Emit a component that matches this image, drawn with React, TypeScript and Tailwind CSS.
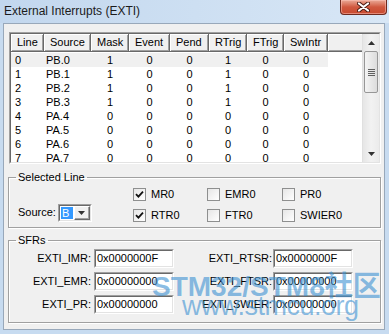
import React from 'react';

const headers = [
  { label: 'Line', w: 'w-[33px]' },
  { label: 'Source', w: 'w-[47px]' },
  { label: 'Mask', w: 'w-[38px]' },
  { label: 'Event', w: 'w-[41px]' },
  { label: 'Pend', w: 'w-[39px]' },
  { label: 'RTrig', w: 'w-[38px]' },
  { label: 'FTrig', w: 'w-[37px]' },
  { label: 'SwIntr', w: 'w-[44px]' },
];

const cellClass = [
  'w-[33px] pl-[4px]',
  'w-[47px] pl-[2px]',
  'w-[38px] text-center',
  'w-[41px] text-center',
  'w-[39px] text-center',
  'w-[38px] text-center',
  'w-[37px] text-center',
  'w-[44px] text-center',
];

const rows = [
  ['0', 'PB.0', '1', '0', '0', '1', '0', '0'],
  ['1', 'PB.1', '1', '0', '0', '1', '0', '0'],
  ['2', 'PB.2', '1', '0', '0', '1', '0', '0'],
  ['3', 'PB.3', '1', '0', '0', '1', '0', '0'],
  ['4', 'PA.4', '0', '0', '0', '0', '0', '0'],
  ['5', 'PA.5', '0', '0', '0', '0', '0', '0'],
  ['6', 'PA.6', '0', '0', '0', '0', '0', '0'],
  ['7', 'PA.7', '0', '0', '0', '0', '0', '0'],
];

const sunken =
  'border border-t-[#a0a0a0] border-l-[#a0a0a0] border-r-white border-b-white';
const sunkenInner =
  'border border-t-[#696969] border-l-[#696969] border-r-[#e3e3e3] border-b-[#e3e3e3]';

function Check({ checked, label }: { checked?: boolean; label: string }) {
  return (
    <div className="h-[19px] flex items-center gap-[5px]">
      <span className="w-[13px] h-[13px] border border-[#8e8f8f] bg-gradient-to-br from-[#e6e6e6] to-white flex items-center justify-center">
        {checked && (
          <svg width="9" height="9" viewBox="0 0 9 9">
            <path d="M1 4.2 L3.4 6.6 L8 1.6" stroke="#111" strokeWidth="1.8" fill="none" />
          </svg>
        )}
      </span>
      <span>{label}</span>
    </div>
  );
}

function Field({ value }: { value: string }) {
  return (
    <div className={`w-[80px] h-[19px] bg-white ${sunken}`}>
      <div className={`h-full flex items-center pl-[1px] ${sunkenInner}`}>{value}</div>
    </div>
  );
}

function Arrow({ down }: { down?: boolean }) {
  return (
    <svg width="7" height="4" viewBox="0 0 7 4">
      <path d={down ? 'M0 0 H7 L3.5 4 Z' : 'M0 4 H7 L3.5 0 Z'} fill="#333" />
    </svg>
  );
}

export default function App() {
  return (
    <div className="w-[389px] h-[334px] relative overflow-hidden bg-[#c7dbf0] font-['Liberation_Sans',Arial,sans-serif] text-[11px] text-black leading-none">
      <div className="h-[23px] flex items-center pl-[4px] pb-[1px] bg-gradient-to-r from-[#c2d7ee] to-[#d8e7f6]">
        <span className="text-[12px] text-[#1b1b1b]">External Interrupts (EXTI)</span>
      </div>
      <div className="absolute top-0 right-[2px] w-[47px] h-[15px] rounded-b-[4px] border border-t-0 border-[#6e2a1f] bg-gradient-to-b from-[#e9aa98] via-[#d0583f] to-[#c84a2f] flex items-center justify-center shadow-[inset_0_0_0_1px_rgba(255,200,190,0.5)]">
        <svg width="13" height="10" viewBox="0 0 13 10">
          <path d="M2 1.5 L11 8.5 M11 1.5 L2 8.5" stroke="#4a1a12" strokeWidth="4" strokeLinecap="round" />
          <path d="M2 1.5 L11 8.5 M11 1.5 L2 8.5" stroke="#fff" strokeWidth="2.2" strokeLinecap="round" />
        </svg>
      </div>

      <div className="ml-[3px] w-[382px] h-[307px] bg-[#f0f0f0] border border-[#98a8ba] pt-[8px] pl-[4px]">
        {/* list view */}
        <div className={`ml-[1px] w-[372px] h-[132px] ${sunken}`}>
          <div className={`h-full bg-white flex overflow-hidden ${sunkenInner}`}>
            <div className="w-[351px] flex flex-col">
              <div className="h-[18px] flex shrink-0">
                {headers.map((h) => (
                  <div
                    key={h.label}
                    className={`${h.w} h-full flex items-center pl-[6px] bg-[#f0f0f0] border-r border-b border-r-[#696969] border-b-[#696969] shadow-[inset_1px_1px_0_#fff,inset_-1px_-1px_0_#a0a0a0]`}
                  >
                    {h.label}
                  </div>
                ))}
                <div className="flex-1 h-full bg-[#f0f0f0] border-b border-b-[#696969] shadow-[inset_1px_1px_0_#fff,inset_0_-1px_0_#a0a0a0]" />
              </div>
              <div className="pt-[1px]">
                {rows.map((r, i) => (
                  <div key={i} className={`h-[14px] w-[317px] flex items-center ${i === 0 ? 'bg-[#f0f0f0]' : ''}`}>
                    {r.map((c, j) => (
                      <div key={j} className={cellClass[j]}>
                        {c}
                      </div>
                    ))}
                  </div>
                ))}
              </div>
            </div>
            {/* scrollbar */}
            <div className="w-[17px] h-full flex flex-col bg-gradient-to-r from-[#e6e6e6] via-[#f2f2f2] to-[#ebebeb] border-l border-l-[#e0e0e0]">
              <div className="h-[17px] flex items-center justify-center">
                <Arrow />
              </div>
              <div className="mx-[1px] h-[42px] rounded-[2px] border border-[#979797] bg-gradient-to-r from-[#f4f4f4] to-[#dcdcdc] flex flex-col items-center justify-center gap-[1px]">
                <span className="w-[7px] h-[1px] bg-[#606060]" />
                <span className="w-[7px] h-[1px] bg-[#606060]" />
                <span className="w-[7px] h-[1px] bg-[#606060]" />
                <span className="w-[7px] h-[1px] bg-[#606060]" />
              </div>
              <div className="flex-1" />
              <div className="h-[17px] flex items-center justify-center">
                <Arrow down />
              </div>
            </div>
          </div>
        </div>

        {/* Selected Line */}
        <fieldset className="mt-[7px] w-[373px] h-[57px] border border-[#a0a0a0] shadow-[inset_1px_1px_0_#fff,1px_1px_0_#fff] p-0 m-0">
          <legend className="ml-[7px] px-[2px] leading-[13px]">Selected Line</legend>
          <div className="h-[43px] flex">
            <div className="w-[124px] h-full flex items-end pb-[5px] pl-[9px]">
              <span className="mb-[4px]">Source:</span>
              <div className={`ml-[2px] w-[34px] h-[18px] bg-white ${sunken}`}>
                <div className={`h-full flex ${sunkenInner}`}>
                  <div className="w-[14px] h-full p-[1px]">
                    <div className="h-full bg-[#3399ff] text-white flex items-center pl-[1px]">B</div>
                  </div>
                  <div className="flex-1 h-full bg-[#f0f0f0] flex items-center justify-center border border-t-white border-l-white border-r-[#696969] border-b-[#696969] shadow-[inset_-1px_-1px_0_#a0a0a0]">
                    <Arrow down />
                  </div>
                </div>
              </div>
            </div>
            <div className="pt-[1px] grid grid-cols-[74px_75px_auto]">
              <Check checked label="MR0" />
              <Check label="EMR0" />
              <Check label="PR0" />
              <Check checked label="RTR0" />
              <Check label="FTR0" />
              <Check label="SWIER0" />
            </div>
          </div>
        </fieldset>

        {/* SFRs */}
        <fieldset className="mt-[6px] w-[373px] h-[89px] border border-[#a0a0a0] shadow-[inset_1px_1px_0_#fff,1px_1px_0_#fff] p-0 m-0">
          <legend className="ml-[7px] px-[2px] leading-[13px]">SFRs</legend>
          <div className="pt-[2px] flex flex-col gap-[4px]">
            {[
              ['EXTI_IMR:', '0x0000000F', 'EXTI_RTSR:', '0x0000000F'],
              ['EXTI_EMR:', '0x00000000', 'EXTI_FTSR:', '0x00000000'],
              ['EXTI_PR:', '0x00000000', 'EXTI_SWIER:', '0x00000000'],
            ].map(([a, av, b, bv]) => (
              <div key={a} className="flex items-center">
                <span className="w-[82px] text-right">{a}</span>
                <div className="ml-[3px]">
                  <Field value={av} />
                </div>
                <span className="w-[98px] text-right">{b}</span>
                <div className="ml-[1px]">
                  <Field value={bv} />
                </div>
              </div>
            ))}
          </div>
        </fieldset>
      </div>

      {/* watermark */}
      <div className="absolute left-[152px] top-[273px] pointer-events-none text-[rgba(60,145,210,0.6)] font-['Liberation_Sans','Noto_Sans_CJK_SC',sans-serif]">
        <div className="text-[28px] font-bold leading-none whitespace-nowrap">STM32/STM8社区</div>
        <div className="ml-[30px] mt-[-8px] text-[27px] leading-none tracking-[-0.5px] whitespace-nowrap">www.stmcu.org</div>
      </div>
    </div>
  );
}
